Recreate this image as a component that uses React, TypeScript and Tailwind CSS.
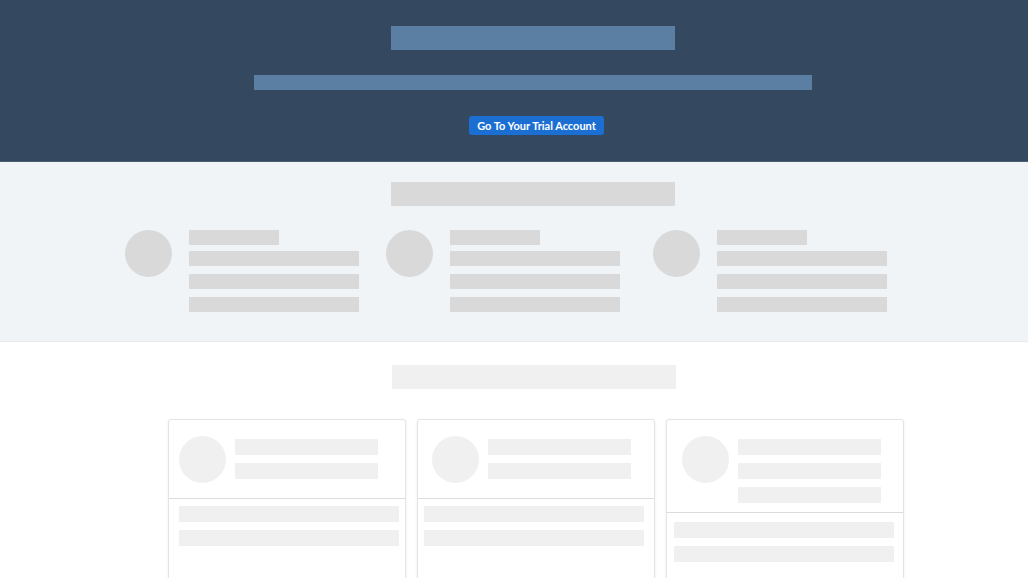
import React from 'react';

const features = [
  { ml: 'ml-[125px]' },
  { ml: 'ml-[27px]' },
  { ml: 'ml-[33px]' },
];

const cards = [
  { head: 'pl-[10px]', body: 'pl-[10px] pt-[7px]', lines: 2 },
  { head: 'pl-[14px]', body: 'pl-[6px] pt-[7px]', lines: 2 },
  { head: 'pl-[15px]', body: 'pl-[7px] pt-[9px]', lines: 3 },
];

function FeatureItem({ ml }: { ml: string }) {
  return (
    <div className={`flex ${ml}`}>
      <div className="w-[47px] h-[47px] rounded-full bg-[#d9d9d9]" />
      <div className="ml-[17px] flex flex-col">
        <div className="w-[90px] h-[15px] bg-[#d9d9d9]" />
        <div className="mt-[6px] w-[170px] h-[15px] bg-[#d9d9d9]" />
        <div className="mt-[8px] w-[170px] h-[15px] bg-[#d9d9d9]" />
        <div className="mt-[8px] w-[170px] h-[15px] bg-[#d9d9d9]" />
      </div>
    </div>
  );
}

function Card({ head, body, lines }: { head: string; body: string; lines: number }) {
  return (
    <div className="w-[238px] h-[200px] bg-white border border-[#e4e4e4] rounded-[3px] shadow-[0_1px_3px_rgba(0,0,0,0.07)] flex flex-col">
      <div className={`flex items-start pt-[16px] pb-[9px] ${head}`}>
        <div className="w-[47px] h-[47px] mb-[6px] rounded-full bg-[#f0f0f0] shrink-0" />
        <div className="ml-[9px] pt-[3px] flex flex-col gap-[8px]">
          {Array.from({ length: lines }).map((_, i) => (
            <div key={i} className="w-[143px] h-[16px] bg-[#f0f0f0]" />
          ))}
        </div>
      </div>
      <div className="h-px bg-[#dcdcdc]" />
      <div className={`flex flex-col gap-[8px] ${body}`}>
        <div className="w-[220px] h-[16px] bg-[#f0f0f0]" />
        <div className="w-[220px] h-[16px] bg-[#f0f0f0]" />
      </div>
    </div>
  );
}

export default function App() {
  return (
    <div className="w-[1028px] h-[578px] overflow-hidden bg-white" style={{ fontFamily: 'Lato, "Liberation Sans", sans-serif' }}>
      {/* trial banner */}
      <div className="h-[162px] bg-[#34495f] flex flex-col items-start border-b border-[#4a5d70]">
        <div className="ml-[391px] mt-[26px] w-[284px] h-[24px] bg-[#5b7fa3]" />
        <div className="ml-[254px] mt-[25px] w-[558px] h-[15px] bg-[#5b7fa3]" />
        <button className="ml-[469px] mt-[26px] h-[19px] w-[135px] rounded-[3px] bg-[#1b6fd3] text-white text-[11px] font-bold leading-none flex items-center justify-center whitespace-nowrap">
          Go To Your Trial Account
        </button>
      </div>

      {/* features */}
      <div className="h-[180px] bg-[#f0f4f7] border-b border-[#e6ebef] flex flex-col">
        <div className="ml-[391px] mt-[20px] w-[284px] h-[24px] bg-[#d9d9d9]" />
        <div className="mt-[24px] flex">
          {features.map((f, i) => (
            <FeatureItem key={i} ml={f.ml} />
          ))}
        </div>
      </div>

      {/* cards */}
      <div className="flex flex-col">
        <div className="ml-[392px] mt-[23px] w-[284px] h-[24px] bg-[#f0f0f0]" />
        <div className="ml-[168px] mt-[30px] flex gap-[11px]">
          {cards.map((c, i) => (
            <Card key={i} {...c} />
          ))}
        </div>
      </div>
    </div>
  );
}
